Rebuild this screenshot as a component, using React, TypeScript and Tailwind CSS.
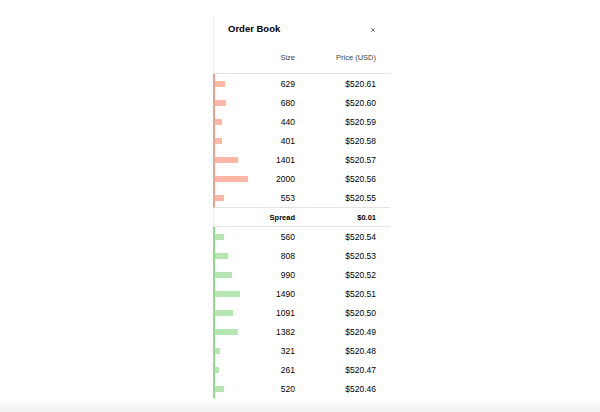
import { X } from 'lucide-react';

const asks = [
  { size: 629, price: '$520.61' },
  { size: 680, price: '$520.60' },
  { size: 440, price: '$520.59' },
  { size: 401, price: '$520.58' },
  { size: 1401, price: '$520.57' },
  { size: 2000, price: '$520.56' },
  { size: 553, price: '$520.55' },
];

const bids = [
  { size: 560, price: '$520.54' },
  { size: 808, price: '$520.53' },
  { size: 990, price: '$520.52' },
  { size: 1490, price: '$520.51' },
  { size: 1091, price: '$520.50' },
  { size: 1382, price: '$520.49' },
  { size: 321, price: '$520.48' },
  { size: 261, price: '$520.47' },
  { size: 520, price: '$520.46' },
];

function Row({ size, price, side }: { size: number; price: string; side: 'ask' | 'bid' }) {
  return (
    <div className="h-[19px] flex items-center pr-[14px] pt-[1px]">
      <div className="flex-1 flex items-center">
        <div
          className={`h-[6px] ${side === 'ask' ? 'bg-[#fcb7a7]' : 'bg-[#b6e6b2]'}`}
          style={{ width: `${size / 60}px` }}
        />
      </div>
      <span className="text-right">{size}</span>
      <span className="w-[81px] text-right">{price}</span>
    </div>
  );
}

export default function App() {
  return (
    <div
      className="w-[600px] h-[412px] bg-white flex flex-col text-black"
      style={{ fontFamily: '"Liberation Sans", Arial, sans-serif' }}
    >
      <div className="flex-1 pt-[16px]">
        <div className="ml-[213px] w-[177px] text-[8.5px]">
          {/* Title */}
          <div className="h-[26px] border-l border-[#ececec] flex items-center justify-between pl-[14px] pr-[14px] pt-[1px]">
            <span className="text-[9.5px] font-bold">Order Book</span>
            <X className="w-[6px] h-[6px] text-[#444]" strokeWidth={3} />
          </div>

          {/* Column headers */}
          <div className="h-[32px] border-l border-[#ececec] border-b border-b-[#e4e4e4] flex items-center pr-[14px] text-[7.5px] text-[#444] font-medium pt-[1px]">
            <span className="flex-1 text-right">Size</span>
            <span className="w-[81px] text-right">Price (USD)</span>
          </div>

          {/* Asks */}
          <div className="border-l-2 border-[#e6a392] border-b border-b-[#e4e4e4]">
            {asks.map((a) => (
              <Row key={a.price} size={a.size} price={a.price} side="ask" />
            ))}
          </div>

          {/* Spread */}
          <div className="h-[19px] border-l border-[#ececec] border-b border-b-[#e4e4e4] flex items-center pr-[14px] font-bold text-[7.5px] pt-[1px]">
            <span className="flex-1 text-right">Spread</span>
            <span className="w-[81px] text-right">$0.01</span>
          </div>

          {/* Bids */}
          <div className="border-l-2 border-[#92d88e]">
            {bids.map((b) => (
              <Row key={b.price} size={b.size} price={b.price} side="bid" />
            ))}
          </div>
        </div>
      </div>
      <div className="h-[13px] bg-gradient-to-b from-white to-[#f1f1f1]" />
    </div>
  );
}
